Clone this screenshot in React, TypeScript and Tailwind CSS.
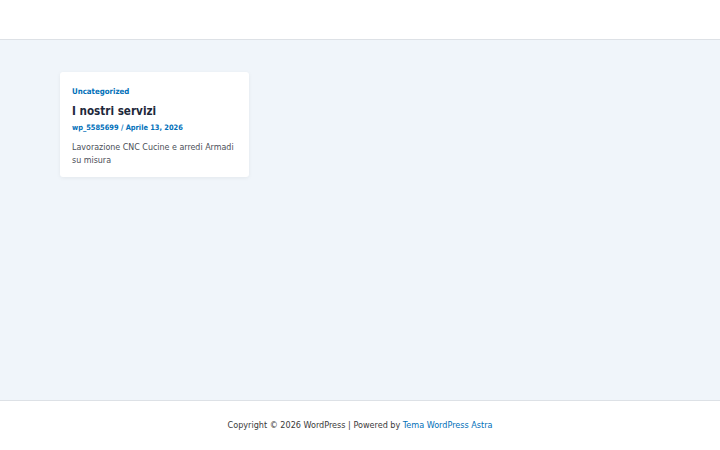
export default function App() {
  return (
    <div
      className="flex h-[450px] w-[720px] flex-col bg-white text-[#3a3a3a]"
      style={{ fontFamily: '"DejaVu Sans Condensed", "DejaVu Sans", sans-serif', fontStretch: "semi-condensed" }}
    >
      {/* Header */}
      <header className="h-[40px] shrink-0 border-b border-[#dde1e6] bg-white" />

      {/* Content */}
      <main className="flex-1 bg-[#f0f5fa] px-[60px] pt-[32px]">
        <article className="w-[189px] rounded-[3px] bg-white px-[12px] pb-[10px] pt-[14px] shadow-[0_1px_4px_rgba(0,0,0,0.06)]">
          <p className="text-[7.8px] font-bold leading-[12px] text-[#0170b9]">Uncategorized</p>
          <h2 className="mt-[6px] text-[11.6px] font-semibold leading-[14px] text-[#1e293b]">I nostri servizi</h2>
          <p className="mt-[4px] text-[7.4px] font-bold leading-[12px] text-[#0170b9]">
            wp_5585699 / Aprile 13, 2026
          </p>
          <p className="mt-[7px] text-[8.85px] leading-[13px] text-[#4b4f58]">
            Lavorazione CNC Cucine e arredi Armadi su misura
          </p>
        </article>
      </main>

      {/* Footer */}
      <footer className="flex h-[50px] shrink-0 items-center justify-center border-t border-[#dde1e6] bg-white text-[9px] text-[#3a3a3a]">
        <span>
          Copyright © 2026 WordPress | Powered by <span className="text-[#0170b9]">Tema WordPress Astra</span>
        </span>
      </footer>
    </div>
  );
}
